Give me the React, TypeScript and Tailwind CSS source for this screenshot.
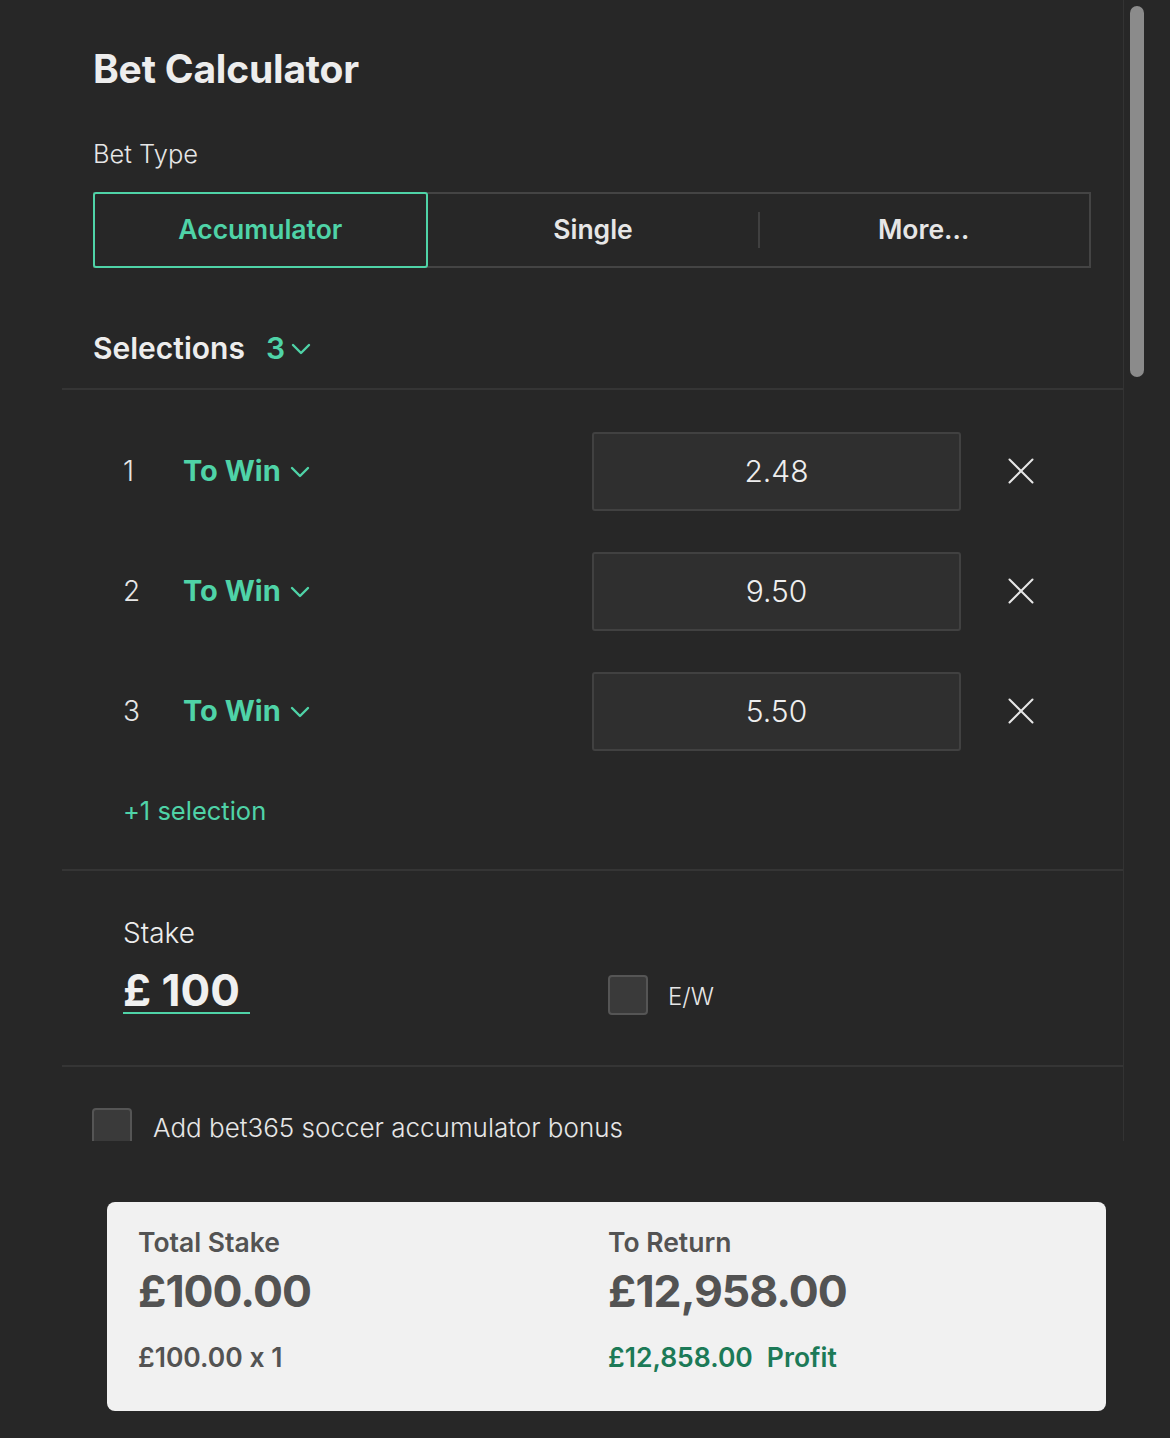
import { useState } from "react";

const GREEN = "text-[#4fd3a7]";

function Chevron({ className = "" }: { className?: string }) {
  return (
    <svg width="20" height="12" viewBox="0 0 20 12" fill="none" className={className}>
      <path d="M2 2l8 8 8-8" stroke="#4fd3a7" strokeWidth="2.4" strokeLinecap="round" strokeLinejoin="round" />
    </svg>
  );
}

function Cross() {
  return (
    <svg width="26" height="26" viewBox="0 0 26 26" fill="none">
      <path d="M1.5 1.5l23 23M24.5 1.5l-23 23" stroke="#e6e6e6" strokeWidth="2" strokeLinecap="round" />
    </svg>
  );
}

function Box() {
  return <div className="w-[40px] h-[40px] shrink-0 rounded-[4px] border-2 border-[#555555] bg-[#3a3a3a]" />;
}

const ODDS = ["2.48", "9.50", "5.50"];
const TYPES = ["Accumulator", "Single", "More..."];

export default function App() {
  const [type, setType] = useState("Accumulator");

  return (
    <div className="w-[1170px] h-[1438px] bg-[#272727] text-[#ececec] font-['Inter',sans-serif] [font-feature-settings:'calt'_0] overflow-hidden">
      <div className="flex h-[1141px]">
        <div className="w-[1124px] border-r border-[#333333] overflow-hidden">
          <div className="ml-[62px]">
            {/* header */}
            <div className="border-b-2 border-[#353535] pl-[31px] pr-[32px]">
              <h1 className="pt-[44px] text-[39px] leading-[50px] font-bold tracking-[-0.2px] text-[#ededed]">Bet Calculator</h1>
              <p className="mt-[45px] text-[25.5px] leading-[30px] font-light text-[#e6e6e6]">Bet Type</p>
              <div className="mt-[23px] flex h-[76px] border-2 border-[#444444]">
                {TYPES.map((t, i) => (
                  <button
                    key={t}
                    onClick={() => setType(t)}
                    className={
                      "relative flex-1 flex items-center justify-center text-[26.5px] font-semibold " +
                      (type === t ? "-my-[2px] -ml-[2px] border-2 border-[#4fd3a7] rounded-[3px] text-[#4fd3a7]" : "text-[#e6e6e6]")
                    }
                  >
                    {i === 2 && <span className="absolute left-0 top-[18px] h-[36px] w-[2px] bg-[#404040]" />}
                    {t === "More..." ? "More…" : t}
                  </button>
                ))}
              </div>
              <div className="flex items-center h-[120px] pt-[40px]">
                <span className="text-[30px] font-semibold text-[#ededed]">Selections</span>
                <span className={"ml-[21px] text-[30px] font-semibold " + GREEN}>3</span>
                <Chevron className="ml-[6px] mt-[1px]" />
              </div>
            </div>

            {/* selections */}
            <div className="border-b-2 border-[#353535] pl-[61px] pt-[21px]">
              {ODDS.map((o, i) => (
                <div key={i} className="flex items-center h-[120px]">
                  <span className="w-[60px] text-[28px] font-light text-[#e6e6e6]">{i + 1}</span>
                  <span className={"text-[29px] font-bold " + GREEN}>To Win</span>
                  <Chevron className="ml-[9px] mt-[2px]" />
                  <div className="ml-auto w-[369px] h-[79px] rounded-[3px] border-2 border-[#414141] bg-[#2f2f2f] flex items-center justify-center text-[30px] font-light text-[#eeeeee]">
                    {o}
                  </div>
                  <div className="w-[162px] flex justify-start pl-[47px]">
                    <Cross />
                  </div>
                </div>
              ))}
              <p className={"h-[98px] pt-[25px] text-[25.5px] leading-[30px] font-normal " + GREEN}>+1 selection</p>
            </div>

            {/* stake */}
            <div className="border-b-2 border-[#353535] pl-[61px] h-[196px] pt-[45px]">
              <p className="text-[28px] leading-[34px] font-light text-[#ededed]">Stake</p>
              <div className="flex items-end mt-[18px]">
                <span className="inline-block w-[127px] border-b-2 border-[#4fd3a7] text-[44px] leading-[44px] font-bold text-[#f0f0f0]">£ 100</span>
                <div className="ml-[358px] flex items-center gap-[20px] mb-[-1px]">
                  <Box />
                  <span className="mt-[3px] text-[24px] font-light text-[#e6e6e6]">E/W</span>
                </div>
              </div>
            </div>

            {/* bonus */}
            <div className="pl-[30px] pt-[41px] flex items-start gap-[21px]">
              <Box />
              <span className="mt-[6px] text-[26px] leading-[28px] font-light text-[#e6e6e6]">Add bet365 soccer accumulator bonus</span>
            </div>
          </div>
        </div>
        <div className="relative flex-1">
          <div className="absolute left-[6px] top-[6px] w-[14px] h-[371px] rounded-full bg-[#8b8b8b]" />
        </div>
      </div>

      {/* totals */}
      <div className="ml-[107px] mt-[61px] w-[999px] h-[209px] rounded-[8px] bg-[#f1f1f1] pl-[31px] pt-[24px] grid grid-cols-[470px_1fr] text-[#535353]">
        <div>
          <p className="text-[26.5px] leading-[32px] font-semibold">Total Stake</p>
          <p className="mt-[7px] text-[44.5px] leading-[52px] font-bold tracking-[-1px]">£100.00</p>
          <p className="mt-[24px] text-[26.5px] leading-[32px] font-semibold">£100.00 x 1</p>
        </div>
        <div>
          <p className="text-[26.5px] leading-[32px] font-semibold">To Return</p>
          <p className="mt-[7px] text-[44.5px] leading-[52px] font-bold tracking-[-1px]">£12,958.00</p>
          <p className="mt-[24px] text-[26.5px] leading-[32px] font-semibold text-[#1c7a57]">
            £12,858.00<span className="ml-[14px]">Profit</span>
          </p>
        </div>
      </div>
    </div>
  );
}
